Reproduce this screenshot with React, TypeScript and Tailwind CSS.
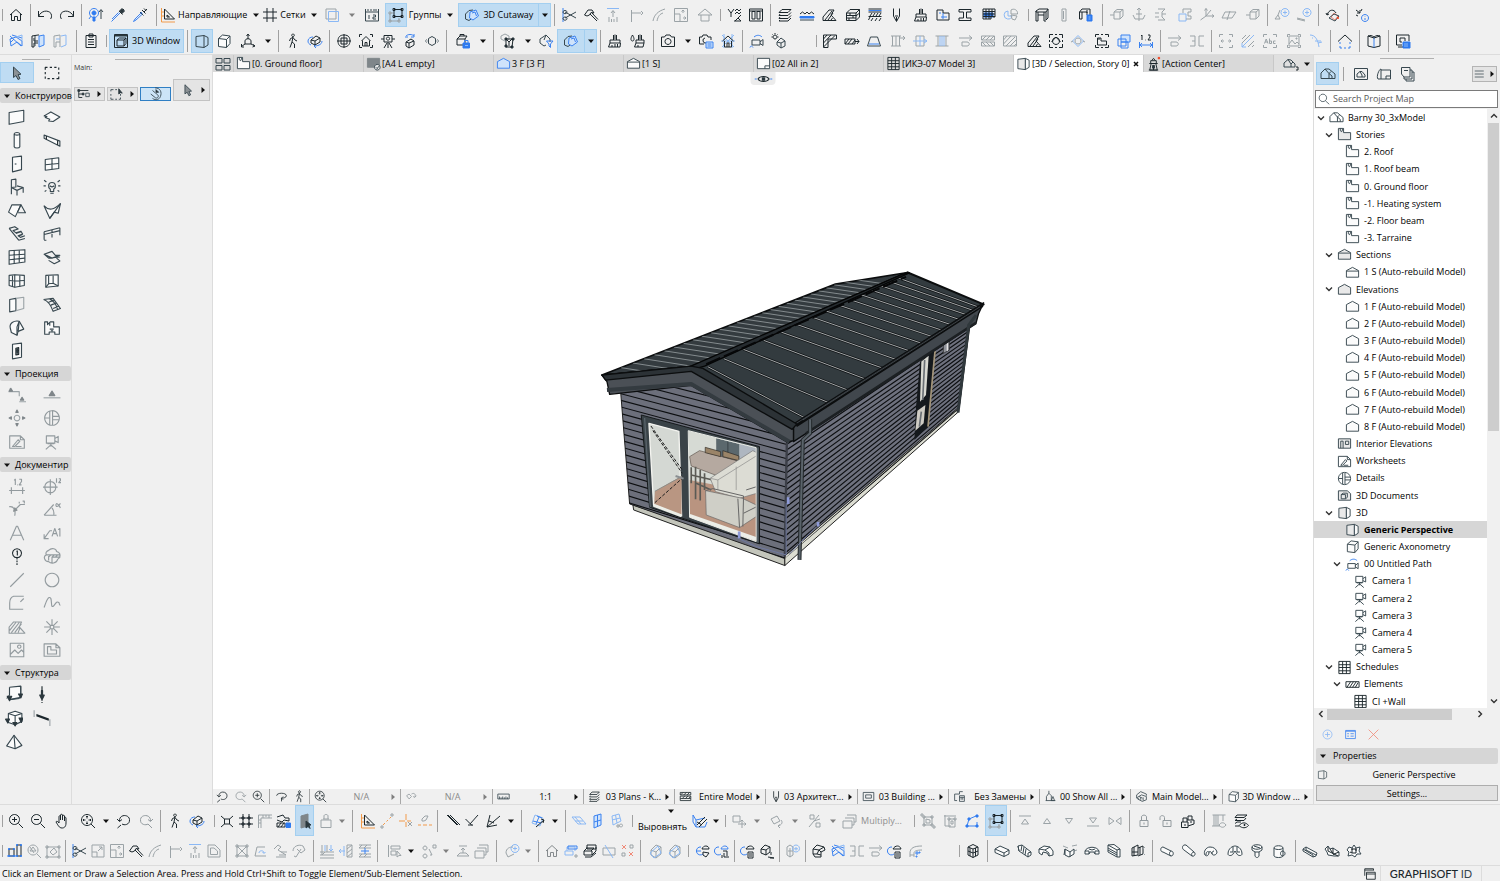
import { useState } from "react"

type Tone = { stroke: string; fill: string }

const TONES: Record<string, Tone> = {
  k: { stroke: "#37474f", fill: "none" },
  b: { stroke: "#3b82f0", fill: "none" },
  c: { stroke: "#8ab8f5", fill: "none" },
  g: { stroke: "#9ba3a7", fill: "none" },
  o: { stroke: "#f29a4a", fill: "none" },
  r: { stroke: "#f08a78", fill: "none" },
  h: { stroke: "#1c272c", fill: "none" },
  K: { stroke: "#2b383e", fill: "#2b383e" },
  B: { stroke: "#2f7bf0", fill: "#2f7bf0" },
  G: { stroke: "#7f868a", fill: "#7f868a" },
  D: { stroke: "#37474f", fill: "#8b9195" },
  W: { stroke: "#37474f", fill: "#fbfbfb" },
  L: { stroke: "#37474f", fill: "#e9e9e9" },
  R: { stroke: "#f4401c", fill: "#f4401c" },
  C: { stroke: "#3b82f0", fill: "#cfe3fb" },
}

// 16x16 drawings: parts split by ";", each with an optional tone prefix
const ICONS: Record<string, string> = {
  home: "h:M2 8L8 2.5L14 8M3.5 7V13.5H6.5V9.5H9.5V13.5H12.5V7",
  undo: "h:M1.5 4V9.5H7M1.5 9.5C4 3.5 11 2.5 14 6.5C15 9 14.5 11 13.5 12",
  redo: "h:M14.5 4V9.5H9M14.5 9.5C12 3.5 5 2.5 2 6.5C1 9 1.5 11 2.5 12",
  find: "b:M6 1.5a4.5 4.5 0 1 0 .01 0M3 9L1 12;B:M6 4a2 2 0 1 0 .01 0M5 10H7V14H5Z;k:M13 12V3M11 5L13 2.5L15 5",
  pipette: "h:M14 2L10 6M9 4L12.5 7.5;K:M12 1.5L14.5 4L12 6.5L9.5 4Z;b:M10 6L3 13L1.5 14.5M8.5 5.5L2 12",
  syringe: "h:M15 2L12 5M10 3L13.5 6.5M12 1.5L14 3.5;b:M10 5L3 12L1.5 14.5L4 13L11 6.5;k:M8 5L11.5 8.5",
  guide: "h:M4.5 2V12H14.5ZM7 8V10H9.5Z;o:M1.5 1V15H15M1.5 5H4M1.5 9H4",
  grid: "h:M5 1V15M11 1V15M1 5H15M1 11H15",
  trace: "g:M2 2H12V12H2Z;c:M4.5 4.5H14.5V14.5H4.5Z",
  ruler12: "k:M1.5 2V5H14.5V2M4 2V4M7 2V4M10 2V4M12 2V4M1.5 5V14H14.5V5M5 8V12M9 8H11.5V10H9V12H12",
  groups: "h:M6 2.5H14V9.5H6ZM5 1.5H7V3.5H5ZM13 1.5H15V3.5H13ZM5 8.5H7V10.5H5ZM13 8.5H15V10.5H13Z;g:M2 6V14H11V11M2 6H5M1 5H3V7H1ZM1 13H3V15H1ZM10 13H12V15H10Z",
  cutaway: "k:M1.5 12V7L5 3.5L9 3M1.5 12L5 13.5L7 12;C:M6 5L12 3L14.5 9L9 13L5.5 11Z;b:M8 6L11 5L12.5 9",
  scissors: "b:M2 1V15;k:M4 5L15 11M4 11L15 5M4 3.5a2 1.6 0 1 0 .01 0M4 10a2 1.6 0 1 0 .01 0",
  hammer: "h:M1.5 8L5 3H9L11 6L8 5.5L6.5 8L4 9ZM7 7L14 14M9 6L15 12.5",
  trimup: "c:M2 1.5H14;g:M8 10V4M6 6L8 3.5L10 6M4 10V15M6.5 12V15M9 12V15M12 10V15",
  corner: "g:M2.5 15V6H12M2.5 9V3M12 4L14 6L12 8",
  fillet: "g:M2 14C3 8 7 4 14 2M6 14C7 9 9 7 12 6",
  resize: "g:M1.5 1.5H14.5V14.5H1.5ZM1.5 7H7V14.5M10 6V3M8.5 4.5L10 3L11.5 4.5M10 11H13M11.5 9.5L13 11L11.5 12.5",
  roofup: "g:M1 8L8 2L15 8L12 8V14H4V8ZM4 8H12",
  tools: "h:M2 2L5 6V10M8 2L5 6M9 4L11 2L13 4L15 2M9 7L11 5L13 7L15 5M9 14L15 8M8 14H15L12 11",
  door2: "h:M1.5 2H14.5V14H1.5ZM4 4.5H7V12H4ZM9 4.5H12V12H9ZM1.5 2V4H14.5",
  layers: "h:M5 2.5H14L11 5.5H2ZM14 5.5L11 8.5H2L3 7M14 8.5L11 11.5H2L3 10M14 11L11 14H2L3 13",
  wave: "h:M1 7L3.5 5L6 7L8 5L10 7L12.5 5L15 7;B:M1 9.5H15V11H1Z;k:M1 13H15",
  hatch: "h:M2 13.5V10L8 3H13L10 8L15 13.5ZM4 13L11 4M7 13L12 6M10 13L11.5 11",
  bricks: "h:M1.5 6L5 2.5H14.5V10L11 13.5H1.5ZM1.5 6H11V13.5M11 6L14.5 2.5M1.5 8.5H11M1.5 11H11M5 6V8.5M8 8.5V11M4 11V13M11 9L14.5 6",
  strata: "h:M1.5 2H14.5M1.5 5H14.5M3 9L5 6M6 9L8 6M9 9L11 6M12 9L14 6M1.5 9.5H14.5M1.5 13L3 10M4 14L6 11M8 14L10 11M12 14L14 11;b:M1.5 3.5H14.5",
  pen: "h:M4.5 1.5V9L7.5 14.5L10.5 9V1.5M6 9H9M7.5 10V14",
  brush: "h:M8 1.5V6M6.5 2V7M9.5 2V7M3 7H13V10H3ZM3 10L1.5 14H13L13.5 10M5 12V14M8 11V14M10.5 11V14",
  puzzle: "h:M2 3H8V6H14V13H2Z;b:M4 6H6M6 10H12M8 6V12",
  ibeam: "h:M2 2.5H14V5H9.5V11H14V13.5H2V11H6.5V5H2Z",
  tableblue: "B:M3 6H12V10H3Z;h:M2 2H14V10H12M2 2V12H10V10M2 4.5H14M2 7H14M2 9.5H14M5 2V12M8 2V12M11 2V10",
  pie: "c:M5 4a4 4 0 1 0 4 5H5Z;g:M8 3C11 1 15 3 14.5 7H8ZM8 8L14 9L12 13L9 12Z",
  shelf: "h:M2 4L5 2H14V11L12 13V5H2ZM2 4V14H4V8H10V14H12M12 5L14 2M4 5V8M10 5V8",
  colgray: "g:M6 2H10V14H6ZM7.5 4V12",
  sheet: "h:M1.5 5L4 2H12V8M1.5 5H9V8M1.5 5V12H4M4 5V12M9 3V6;B:M9 8H14V14H9Z;c:M10.5 10H12.5M10.5 12H12.5",
  cube3: "g:M5 5L8 2.5H14V9L11 12H5ZM5 5H11V12M11 5L14 2.5M1 8H5",
  axisanchor: "g:M8 1V14M6 3L8 1L10 3M2 8L4 12H12L14 8M5 7H11",
  split3: "g:M5 2H12L9 5V10L12 13H5M2 6H6M2 10H6M9 7H13",
  overlap: "c:M2 7H9V14H2Z;g:M6 2H14V5H11V9H14V12H9M6 2V6",
  axes: "g:M7 9V1.5M5.5 3.5L7 1.5L8.5 3.5M7 9L1.5 13M7 9H15M13 7.5L15 9L13 10.5M7 9L12 3",
  plane: "g:M4 5H15L11 11H1ZM9 4L6 13",
  plusshape: "g:M1 12L4 8L6 12ZM4 8L6 3;c:M11 1.5a4 4 0 1 0 .01 0M11 3.5V7.5M9 5.5H13",
  plusline: "g:M1 11L9 13M1 12L9 14;c:M11 1.5a4 4 0 1 0 .01 0M11 3.5V7.5M9 5.5H13",
  rotcam: "h:M2 8C4 2 9 2 11 6M1 6L2 8L4 7;r:M9 6L13 9L10 13L6 10Z;k:M4 11L9 7L14 9L10 14Z;R:M12.5 10.5h1v1h-1z",
  info: "h:M2 3L6 6M3 6L6 6L6 3M2 8L4 9M8 2L7 4;b:M11 7.5a3.5 3.5 0 1 0 .01 0M11 9.5V10M11 11V13",
  favblue: "b:M2 6L8 4L14 8V13L9 9L3 13ZM2 3L13 13M4 2L14 5M2 10L6 6;c:M8 4L14 2V8",
  panelblue: "h:M2 3L8 2H9M2 3V14H4V10H8M4 5V8H8;C:M9 3L14 2V12L9 14Z;k:M5 3V13",
  panelgray: "g:M2 3L8 2V14M2 3V14H4V9H8;c:M9 3L14 2V12L9 14M4 6H8",
  clipboard: "h:M3 2.5H13V14.5H3ZM6 1H10V4H6ZM5 6.5H11M5 9H11M5 11.5H11",
  win3d: "h:M1.5 1.5H14.5V14.5H1.5ZM4 7L6.5 5H13V10.5L11 13H4ZM4 7H11V13M11 7L13 5;K:M2 2H14V3H2Z",
  persp: "k:M2 3.5L10 2.5V14.5L2 13.5ZM10 2.5L14 4.5V12L10 14.5",
  perspbold: "L:M2 3.5L10 2.5V14.5L2 13.5Z;W:M10 2.5L14 4.5V12L10 14.5Z",
  axono: "W:M2.5 5.5L6.5 2L14 3V10.5L10.5 14.5L2.5 13.5Z;k:M2.5 5.5L10.5 6.5V14.5M10.5 6.5L14 3",
  cam3: "h:M8 6V1.5M6.5 3L8 1L9.5 3M5 8C5 5 11 5 11 8V11H5ZM5 11L1.5 13.5M11 11L15 13M1.5 11V14H4M13 11.5L15 13L12.5 14",
  walk: "h:M8 1a1.3 1.3 0 1 0 .01 0M8 4L7 9L9.5 11V15M7 9L5 14.5M4.5 8L5.5 5.5L8 4.5L10 7L12 8",
  orbit: "b:M1 8C1 5 4 4 6 4M15 8C15 12 10 13 7 13M7 13L9 11M7 13L9 15M1 8C1 10 2 11 4 12;h:M4 7L9 3L13 5V9L8 12L4 10ZM4 7L8 8L13 5M8 8V12",
  target: "h:M8 2C13 2 14 5 14 8C14 12 11 14 8 14C4 14 2 12 2 8C2 4 4 2 8 2M8 1V15M1 8H15M5 5H11V11H5Z",
  fitview: "h:M1.5 4V1.5H4M12 1.5H14.5V4M1.5 12V14.5H4M12 14.5H14.5V12M3.5 8L8 3.5L12.5 8M4.5 7.5V13H11.5V7.5M7 13V9.5H9V13",
  survey: "h:M4 2.5H12V9H4ZM8 4a1.6 1.6 0 1 0 .01 0M8 9V15M7 10L4 15M9 10L12 15M1 6H4M12 6H15",
  rotbox: "b:M4 3C6 1 10 1 12 3M3 4H6M12 1V4H9;h:M4 9L9 6L12 8V12L7 15L4 13ZM4 9L7 10L12 8M7 10V15",
  expand: "g:M1 8H4M12 8H15M3 6L1 8L3 10M13 6L15 8L13 10;k:M8 3.5L11.5 5.5V10.5L8 12.5L4.5 10.5V5.5Z",
  boxlock: "h:M2 6L5 3H12L10 6V12H2ZM2 6H10M5 3V1.5H9V3;B:M8 10H14.5V15H8Z;b:M9.5 10V7.5H13V10;c:M10 12.5H13",
  nodes: "K:M5 5h2v2H5ZM12 5h2v2h-2ZM5 12h2v2H5ZM11 13h2v2h-2Z;g:M1 3L5 1L9 3V6L5 8L1 6Z;h:M6 6L13 6L12 14H6ZM6 6L9 9L12 6M9 9V13",
  filter: "k:M2 10V6L8 2L12 6V9M2 10L6 13L8 12M6 7L8 2;b:M8.5 8H15L12.5 11V14.5L11 13V11Z",
  water: "h:M11 1.5V6M9.5 2V7M12.5 2V7M7 7H15V10H7ZM7 10L5.5 14H14L15 10M9 12V14M3.5 2C6 6 5 8 3.5 8C2 8 1 6 3.5 2",
  photo: "h:M1.5 4H4.5L6 2H10L11.5 4H14.5V13.5H1.5ZM8 5.5a3 3 0 1 0 .01 0",
  photoset: "h:M1.5 4H4L5 2H9L10 4H13V7M1.5 4V11H6M7 5a2.5 2.5 0 1 0 1 5;C:M8 9H15V15H8Z;b:M9.5 11H13.5M9.5 13H13.5",
  housegrid: "c:M2 2L14 14M14 2L2 14M1 8H15M4 1V15M12 1V15;h:M2.5 8L8 3L13.5 8M4.5 8V14H11.5V8M7 14V10H9V14",
  campath: "k:M3 7H11V12H3ZM11 9L14 6.5V12.5L11 10.5;b:M5 4C8 1.5 11 2 13 4M1 14.5C2 12 3 13 4 14.5",
  sunhouse: "h:M4 2a2 2 0 1 0 .01 0M4 0V1M0.5 4H1.5M6.5 4H7.5M1.5 1.5L2 2M6.5 1.5L6 2;k:M6 9L10 5L14 8V13L10 15L6 12ZM6 9L10 10L14 8M10 10V15",
  wallcorner: "h:M1.5 2H14.5V6H6V14.5H1.5ZM1.5 6L5 2M1.5 10L9 2M1.5 14L13 2.5",
  beamarrow: "h:M1 6H11V11H1ZM1 11L5 6M4 11L8 6M8 11L11 7M11 8.5H15M13 6L15 8.5L13 11",
  trap: "k:M4.5 4H11.5L14.5 13H1.5Z;b:M3 11H13",
  colsarrow: "g:M1 3H11M1 13H11M2.5 3V13M6 3V13M9.5 3V13M9 5H15M13 3L15 5L13 7",
  colsarrowb: "g:M4 3H12M4 13H12M4 3V13M12 3V13;c:M1 8H15M12 6L15 8L12 10M8 3V13",
  beamb: "g:M1.5 3H14.5M1.5 13H14.5M4 3V13M12 3V13;c:M8 3V13M6 3V13M10 3V13",
  arrowcap: "g:M1 5H14M11 2.5L14 5L11 7.5M4 9H9C12 9 12 13 9 13H4M4 9V13",
  hatchg: "g:M1.5 3H14.5V7H1.5ZM1.5 9H14.5V13H1.5ZM2 7L6 3M6 7L10 3M10 7L14 3M2 9L6 13M6 9L10 13M10 9L14 13",
  hatchg2: "g:M1.5 3H14.5V13H1.5ZM1.5 7L5 3M1.5 11L9 3M4 13L13 4M8 13L14 7M12 13L14 11",
  selcirc: "h:M1.5 5V1.5H5M7 1.5H9M11 1.5H14.5V5M14.5 7V9M14.5 11V14.5H11M9 14.5H7M5 14.5H1.5V11M1.5 9V7M8 4.5a3.5 3.5 0 1 0 .01 0M3.5 9L8 4L12.5 9",
  circb: "c:M8 2.5L13.5 8L8 13.5L2.5 8Z;g:M8 5a3 3 0 1 0 .01 0M1 9L3 8M13 8L15 9",
  selplan: "h:M1.5 4V1.5H5M7 1.5H9M11 1.5H14.5V4M1.5 12V14.5H5M7 14.5H9M11 14.5H14.5V12M3.5 5H7V8H12.5V12H3.5ZM5 5V7",
  dupe: "C:M5 2H14V9H5Z;b:M2 6H10V13H2ZM5 9H12V15H5Z",
  dim12: "h:M4 2V7M3 3L4 2M7 7H7.5M10 2H12V4L10 7H13;b:M1.5 9V15M14.5 9V15M1.5 12H14.5M4 10L2 12L4 14M12 10L14 12L12 14",
  mirror: "g:M1 3H6V13H1M10 3V13M15 3H10M15 13H10M3 8H6",
  frame: "g:M1.5 4V1.5H5M11 1.5H14.5V4M1.5 12V14.5H5M11 14.5H14.5V12M3 8H6M10 8H13M4.5 6.5L3 8L4.5 9.5M11.5 6.5L13 8L11.5 9.5",
  hatchb: "g:M2 6L6 2M2 10L10 2M8 14L14 8M12 14L14 12;c:M2 14L14 2M2 10V14H6",
  abc: "g:M1.5 4V1.5H5M11 1.5H14.5V4M1.5 12V14.5H5M11 14.5H14.5V12M2.5 10.5L4.2 6L6 10.5M3 9H5.5M7.5 5.5V10.5H9.5V8H7.5M13.5 8H11.5V10.5H13.5",
  image: "g:M1.5 4V1.5H4M12 1.5H14.5V4M1.5 12V14.5H4M12 14.5H14.5V12M3 3H13V13H3ZM3 11L6 7L9 11L11 9L13 11M10 5h1v1h-1z",
  arcnode: "c:M2 2C8 2 10 8 11 14M7 8H13M4 5h1M10 10L14 9",
  roofdash: "h:M1 8.5L8 2L15 8.5;b:M3 9V11M3 13V15H5M7 15H9M11 15H13V13M13 11V9",
  book: "h:M2 3C4 2 6 2.5 8 4C10 2.5 12 2 14 3V13L8 14.5L2 13Z;b:M8 4V14.5;h:M2 3L8 5L14 3",
  monlock: "h:M1.5 2H14V8M1.5 2V12H7M5 5H10V8M5 5V9H7M3 14H8;B:M8 9H15V15H8Z;c:M9 11H13M9 13H13",
  cursor: "D:M4.5 2V12.5L7 10.5L9 14.5L11 13.5L9 9.7L12 9.2Z",
  marquee: "h:M2 5V3H4M6 3H8M10 3H12M14 3V5M14 7V9M14 11V13H12M10 13H8M6 13H4M2 13V11M2 9V7",
  wall: "W:M1 4L14 2V12L1 14.5Z",
  slab: "W:M1 7L7 3.5L15 8L9 12L5 11.5L6 10L2 8.5L3.5 7.5Z",
  column: "W:M5.5 2.5C6 1 10 1 10.5 2.5V14C10 15.5 6 15.5 5.5 14ZM5.5 2.5C6 4 10 4 10.5 2.5",
  beam: "W:M1 3.5L15 9V13.5L1 6.5Z;h:M3 4.5V7.5M13 8.5V12.5",
  door: "W:M4 2L12 1V13L4 15Z;k:M6 8H7.5",
  window: "W:M2 4L14 2.5V12L2 13.5Z;k:M8 3.2V12.8M2 8.7L14 7.5",
  chair: "k:M3 1.5L7 1V8L3 8.5ZM3 8.5V14.5M3 8.5L8 11L13.5 8.5L8 7M8 11V15.5M13.5 8.5V13",
  lamp: "k:M8 4C11.5 4 12 8 9.5 10V12H6.5V10C4 8 4.5 4 8 4M6.5 13.5H9.5M6 7L8 8L10 7M1 2L3 3.5M15 2L13 3.5M0.5 7H2.5M13.5 7H15.5M1.5 12L3 11M14.5 12L13 11",
  roof: "W:M3.5 2.5H11.5L6.5 13L0.5 9Z;k:M11.5 2.5L15.5 9.5L9 9.5M11.5 2.5L8.5 9",
  shell: "W:M1 3.5C5 8 10 7 15.5 1.5L13.5 10L10 9L6 14.5Z;k:M6 14.5L15.5 1.5",
  stair: "k:M1 3L6 1.5L9 3.5L4.5 5L7 7L11.5 5.5L13 8L9 9.5L11 11L15 9.5M9.5 13.5L15 12M1 3L9.5 13.5M4.5 5L9 3.5M7 7.5L11.5 6M9 10L13 8.5",
  rail: "k:M1 6L15 2.5M1 8.5L15 5M1 6V13M8 4.5V11M15 2.5V9M1 13.5H3",
  curtain: "W:M1 2.5L15 1.5V12.5L1 14.5Z;k:M5.5 2V14M10 2V13M1 6.5L15 5.5M1 10.5L15 9",
  deck: "k:M1 5.5L8 3L11 6.5L15 6.5L8 9ZM1 5.5L5 9L8 9M5 9L15 8M5 11L10 14L15 11.5L12 9",
  curtain2: "W:M1 3L6 2.5L14.5 3V12L6 13.5L1 12Z;k:M4 3V13M6 2.5V13.5M10.5 3V13M1 7.5L6 8L14.5 7.5",
  corner2: "W:M2.5 3L13.5 2.5V12.5L2.5 13.5Z;k:M9 3V10M2.5 13.5L5 10.5L9 10L13.5 12.5M5 3.5V10.5",
  opening: "W:M1.5 4L7 3V14L1.5 15Z;g:M7 3L14 2V12L7 14",
  mesh: "k:M0.5 4L9 3L15.5 12L9 14.5C7 9 4 5 .5 4M7 9L12 7M5 6.5L10 4.5M9 12L14 10M6 3.5C9 5 12 9 13 13",
  morph: "W:M2 8C1 4 5 1 10 2L14 9L9 11L8 14.5L3 12Z;k:M10 2L8 7L8 14.5M10 2L9 11",
  zone: "W:M1.5 2.5H4V5L6.5 2.5H9.5V7H14.5V13.5H10.5V11.5H5.5V13.5H1.5Z;k:M6 6V3M6 9H9.5M7 10.5H9",
  switch: "W:M4 2L12 1V13.5L4 15Z;h:M7 5.5L9.5 5V11L7 11.5ZM7 8L9.5 7.5;K:M7.8 6V10H8.5V6Z",
  section: "g:M0.5 5H10V9M12 11V12.5M10 14H16M2 2V3;G:M1 4.5L2.5 2L4 4.5ZM11 12.5L12.5 10L14 12.5Z",
  elev: "g:M0.5 10.5H15.5;G:M5.5 8.5L8 4.5L10.5 8.5Z",
  intelev: "g:M8 5.5a2.5 2.5 0 1 0 .01 0;G:M7 3L8 1L9 3ZM7 13L8 15L9 13ZM3 7L1 8L3 9ZM13 7L15 8L13 9Z",
  detail: "k:M8 1.5a6.5 6.5 0 1 0 .01 0M6 2V14M8.5 2V14M8.5 6.5H14M8.5 9.5H14M1.5 8H6",
  sheetpen: "k:M1.5 2.5H11L14.5 6V13.5H1.5ZM11 2.5V6H14.5M4 12L9 6L10.5 7.5L6 12ZM7 12H12",
  camera: "k:M3 2.5H10.5V9H3ZM10.5 5L13.5 3V8.5L10.5 7M7 9V12M2.5 14.5L7 10.5L11.5 14.5M4 9.5H10",
  dim: "k:M1 12H15M3 9V15M13 9V15M5.5 3L6.5 2V7M8 7H8.5M10 2H12V4L10 7H12",
  level: "k:M6.5 4a5 5 0 1 0 .01 0M6.5 2V16M0 9H13M12 1V5M14 1.5H15.5V3L14 5H16",
  radial: "k:M1 6C5 5 7 9 6 14M6 9L11 4H15M10 1.5V3M13 1H14.5V3;K:M5 10L6 7L8 9Z",
  angle: "k:M1 13.5H12M1 13.5L9.5 4M8 7C9.5 9 10 11 9.5 13M15.5 3C13 7 11.5 6 11.5 4.5C11.5 3 13 2 15.5 7",
  textA: "k:M2 14.5L7.5 2H8.5L14 14.5M4 10H12",
  label: "k:M1 13L6 6H8M1 9V13H5M8 11L10.5 4L13 11M9 8.5H12M13.5 5L15 4V11",
  marker: "h:M8 1.5a4 4 0 1 0 .01 0M7.5 4L8.3 3.5V7.5M8 9.5V11M8 12V13.5M8 14.5V16",
  patch: "k:M5 3C8 0 12 2 12 4C16 5 16 9 13 11C12 15 7 15 5 13C1 13 0 8 3 7C2 5 3 4 5 3M3 7H15V9H8V14M5 9L7 7M8 9L10 7M11 9L13 7M5 12V8",
  line: "k:M2 14L14 2",
  circle: "k:M8 2a6 6 0 1 0 .01 0",
  poly: "k:M14 4L11 7M14 2H5C2 3 1.5 5 1.5 8V13.5H13.5",
  spline: "k:M1 12C3 6 5 1 7 4C8 8 7 12 9 11C11 9 12 6 14 7.5C15 8.5 14 10 15.5 10",
  fill: "k:M1 13.5V8L5 3.5H12L10 8L15 13.5ZM3 13L10 4M6 13L12 5M9 13L10.5 9M1.5 11L7 4",
  hotspot: "k:M8 1V6M8 10V15M1 8H6M10 8H15M3 3L6.5 6.5M13 3L9.5 6.5M3 13L6.5 9.5M13 13L9.5 9.5M6.5 6.5H9.5V9.5H6.5Z",
  figure: "k:M2 2H14V14H2ZM2 12L6 8L9 11L12 8L14 10M10 3.5a1.5 1.5 0 1 0 .01 0",
  drawing: "k:M1 2.5H11.5L15 6V13.5H1ZM11.5 2.5V6H15M4 5H7V8H12V11.5H4Z",
  sup2d: "W:M4 2L14 1V11L4 13;k:M4 2V9M14 1V8M1.5 12L4 9M4 13L13 12;K:M2 10L6 10L4 14ZM12 8H15.5L14 11.5Z",
  point: "h:M8 1V10M8 13V14M8 15V16;K:M6 9H10L8 13ZM7.5 5H8.5V9H7.5Z",
  box3d: "W:M3 4L9 2L15 4V11L9 14L3 12Z;k:M3 4L9 6L15 4M9 6V14;K:M0.5 9H4L2.5 12.5ZM7 12H10.5L9 15ZM12.5 8H16L14.5 12Z",
  link: "g:M1 1V7M15 9V15;h:M3 5L14 9M3 6L14 10M3 5.5L14 9.5",
  tetra: "W:M8 2L15 11L9 14L1.5 11.5Z;k:M8 2L9 14",
  story: "W:M1.5 1.5H7V6H14.5V13.5H1.5Z;k:M3.5 1.5V4L5 5L6.5 1.5",
  storygray: "L:M1.5 1.5H7V6H14.5V13.5H1.5Z;k:M3.5 1.5V4L5 5L6.5 1.5",
  sect: "W:M1.5 6L8 2.5L14.5 6V13H1.5Z;k:M1.5 6.5H14.5",
  sectgray: "L:M1.5 6L8 2.5L14.5 6V13H1.5Z;k:M1.5 6.5H14.5",
  elv: "W:M1.5 6L8 2.5L14.5 6V13H1.5Z",
  elvgray: "L:M1.5 6L8 2.5L14.5 6V13H1.5Z",
  elvblue: "C:M1.5 6L8 2.5L14.5 6V13H1.5Z",
  project: "k:M1 12.5V7L5 3H9L15 8V12.5H1M9 12.5V7.5L5 3M9 7.5L11 5.5M12 12.5V10L9 7.5",
  intel: "L:M1.5 3H14.5V13H1.5Z;k:M4 5.5H6.5V13M4 5.5V13M9 5.5H12.5V9H9Z",
  doc3d: "L:M1.5 3H11L14.5 6V13H1.5Z;k:M4.5 7L6.5 5.5H11V10L9 11.5H4.5ZM4.5 7H9V11.5",
  schedule: "h:M2 1.5H14V14.5H2ZM2 5H14M2 8H14M2 11.5H14M6 1.5V14.5M10 1.5V14.5",
  element: "h:M1 5H15V11H1ZM2 11L6 5M5 11L9 5M8 11L12 5M11 11L14 6",
  layoutgray: "G:M1.5 2.5H14.5V12H1.5Z;L:M12 9a3 3 0 1 0 .01 0;k:M10.5 12L12 13.5L13.5 11",
  layout: "W:M1.5 2.5H14.5V13.5H1.5Z;k:M9.5 13.5V10.5H14.5",
  tower: "h:M5 5H11V8H5ZM6 5L8 2.5L10 5M3.5 8H12.5M5.5 8L4 15H12L10.5 8M3 15H13M8 10V15;K:M7 10h2v3H7z;R:M13 1.5h1.5v1.5h-1.5z",
  squares: "k:M1 2.5H7V7H1ZM9 2.5H15V7H9ZM1 9.5H7V14H1ZM9 9.5H15V14H9Z",
  cloudhouse: "k:M1 11V7L5 3.5L8 4L12 8V11H1M5 3.5L8 8V11M8 8L10 6;h:M13 11H15V14H13",
  viewmap: "k:M1.5 2.5H14.5V13.5H1.5ZM4 11V8L7 5.5H9L12 9V11H4M9 11V9L7 5.5",
  layoutbook: "k:M2 13C0 11 3 3 5 3V13H14.5V4H5M10 13V10H14.5M2 13H5",
  publisher: "k:M2.5 1.5H11V11H5L2.5 8ZM5 4.5H9M5 11V13H13V4H11M7 13V15H15V6H13",
  zoomin: "h:M6.5 1.5a5 5 0 1 0 .01 0M10.5 10.5L15 15M6.5 4V9M4 6.5H9",
  zoomout: "h:M6.5 1.5a5 5 0 1 0 .01 0M10.5 10.5L15 15M4 6.5H9",
  hand: "h:M5 10V3.5C5 2.5 6.5 2.5 6.5 3.5V7V2C6.5 1 8.5 1 8.5 2V7V3C8.5 2 10.5 2 10.5 3V8V5C10.5 4 12 4 12 5V10C12 14 10 15 8 15C5 15 4 12 2 9C2 8 4 8 5 10",
  zoomfit: "h:M7 1.5a5.5 5.5 0 1 0 .01 0M11 11L15 15M7 3V5.5M7 8.5V11M3 7H5.5M8.5 7H11M6 4L7 3L8 4M6 10L7 11L8 10M4 6L3 7L4 8M10 6L11 7L10 8",
  zprev: "h:M3.5 8C3 1 13 1 13.5 6.5C14 12 8 12.5 6 11M1 6L3.5 8.5L6 6.5M5 12L1.5 15",
  znext: "k:M12.5 8C13 1 3 1 2.5 6.5C2 12 8 12.5 10 11M15 6L12.5 8.5L10 6.5M10 11L14 15",
  snap: "h:M2 3L6 6.5M14 3L10 6.5M2 14L6 10.5M14 14L10 10.5M5.5 6H10.5V11H5.5Z",
  gridb: "h:M5 1V15M11 1V15M1 5H15M1 11H15M4 4h2v2H4zM10 4h2v2h-2zM4 10h2v2H4zM10 10h2v2h-2z",
  rulerg: "g:M1.5 15V2H15M4 15V5H15M6 2V5M9 2V4M12 2V5M1.5 7H4M1.5 10H4",
  gravity: "h:M1 4L7 2L9 5H13V8L8 7L6 9L1 7M1 10H9V14H1ZM2 14L5 10M5 14L8 10;B:M10 10H14.5V14.5H10Z",
  lockwall: "G:M4 3L11 1V13L4 15Z;K:M9 8V15L11 13.5L13 15.5L12 12H14Z",
  weight: "g:M6 6V3C6 1 10 1 10 3V6M3 7H13V14.5H3ZM5 6H11",
  oline: "g:M2 13h2v2H2zM12 1h2v2h-2z;o:M4 12L6 10M7.5 8.5L9 7M10.5 5.5L12 4",
  ocross: "o:M1 8H7M8 1V7M8 9V14;g:M10 9L14 13M14 9L10 13;o:M9 8H13",
  erase: "g:M5 6L8 3H11L9 7L7 8H5Z;o:M1 12H4M6 12H10M12 12H15",
  paral: "h:M2 2L12 12M3 2L13 12M5 2L15 12",
  perp: "h:M1.5 6L8 12.5M6 11L14 2M4 12H9",
  bisect: "h:M2 14L15 3M2 14L5 2M2 14L12 12M4 8L9 10",
  editplane: "c:M6 2L14 5L11 13L3 10Z;b:M8 3L13 5M4 8L12 10M10 4L7 11;h:M7 14L15 7M12 6L15 7L14 10",
  planeh: "c:M1 4H9L15 11H7ZM4 4L10 11M4 8H12",
  planev: "C:M4 3L11 1V12L4 15Z;b:M7.5 2V13.5M4 9L11 7",
  planeg: "c:M3 3L10 1L12 8L4 12ZM6.5 2L8 10M3 7L11 5;g:M8 12h2v2H8zM12 11a1.5 1.5 0 1 0 .01 0",
  skew: "b:M1 2L4 7V14H13L15 9M1 2V9L4 14M4 7L13 5;h:M5 12L13 4M7 14L15 6M5 9L10 12",
  move: "g:M2 3H9V9H2ZM7 11H15M11 7V15M9.5 8.5L11 7L12.5 8.5M13.5 9.5L15 11L13.5 12.5",
  rotate: "g:M2 6L8 3L11 8L5 11ZM12 7C14 9 13 12 9 13M11 11.5L9 13L11 15",
  percent: "g:M2 14L12 2M3 2H7V6H3ZM9 10H13V14H9ZM7 8L13 6",
  stack: "g:M5 2H14V9H12M3 5H12V12H10M1 8H10V15H1Z",
  grp1: "g:M4 4H12V12H4ZM3 3h2v2H3zM11 3h2v2h-2zM3 11h2v2H3zM11 11h2v2h-2zM6 6L10 7V10H6ZM1 1h2v2H1zM13 13h2v2h-2z",
  grp2: "g:M2 3H14M3 2V13H9M7 6H13V14H7ZM6 5h2v2H6zM12 5h2v2h-2zM9 8h2v3H9z",
  polyb: "b:M3 13H13V9M3 13L5 6L12 3;B:M2 12h2v2H2zM4 5h2v2H4zM12 2h2v2h-2zM12 12h2v2h-2z",
  topup: "g:M2 3H14M4.5 11L8 6L11.5 11Z",
  up: "g:M4.5 10.5L8 5.5L11.5 10.5Z",
  down: "g:M4.5 5.5L8 10.5L11.5 5.5Z",
  bottom: "g:M2 13H14M4.5 5L8 10L11.5 5Z",
  flip: "g:M2 4.5L7 8L2 11.5ZM14 4.5L9 8L14 11.5Z",
  lock: "k:M4 7.5H12V13.5H4ZM5.5 7.5V4C5.5 1.5 10.5 1.5 10.5 4V7.5M8 9.5V11.5",
  unlock: "k:M5 7.5H13V13.5H5ZM2 7V4.5C2 2 6.5 2 6.5 4.5V7.5M9 9.5V11.5",
  locks: "h:M1.5 9H8V14.5H1.5ZM3 9V5H7V9M7 7H14V11L8 13M8 7V3H12V7M5 11V13M11 8V10",
  colsg: "g:M1.5 2H14.5M3 2V13M7 2V13M12 2V8M1 13H9M5 2V13M8 12C10 9 13 9 15 12C13 15 10 15 8 12",
  layereye: "h:M4 2H14L11 4.5H2ZM13 5L11 7.5H2L4 6M2 10.5L4 9H8M2 13H6M6 12.5C9 9 13 9 15.5 12.5C13 15.5 9 15.5 6 12.5M11 11.5h1v1h-1z",
  barsb: "h:M2 6H7V13H2ZM10 2H14V13H10Z;B:M1.5 5.5h1v1h-1zM6.5 12.5h1v1h-1zM1.5 12.5h1v1h-1zM6.5 5.5h1v1h-1zM9.5 1.5h1v1h-1zM13.5 12.5h1v1h-1zM13.5 1.5h1v1h-1zM9.5 12.5h1v1h-1z;b:M0 13H9",
  magsel: "g:M7 2a5 5 0 1 0 .01 0M11 11L15 15M4 8L7 4L10 8ZM4 4L8 10",
  framebrush: "g:M2 4H14V14H2ZM1 3h2v2H1zM13 3h2v2h-2zM1 13h2v2H1zM13 13h2v2h-2zM5 9L9 5L12 9L8 12Z",
  scale: "g:M2 2H14V14H2ZM2 9H7V14M8 8L12 4M9 4H12V7",
  offsetc: "g:M2 2H9L14 7V14H2ZM4.5 5H8L11.5 8V11.5H4.5Z",
  crossbox: "g:M3 3H13V13H3ZM3 3L13 13M13 3L3 13M2 2h2v2H2zM12 2h2v2h-2zM2 12h2v2H2zM12 12h2v2h-2z",
  boxrot: "g:M2 13L4 4H12M2 13H13;c:M6 10C6 7 11 7 11 10M9.5 9L11 10.5L12.5 9",
  hamg: "g:M2 6L6 2L9 4L6 7L14 12M9 9H15M7 12H14M4 14H14",
  hamg2: "g:M2 8C2 3 8 1 12 3L14 7L10 10L6 6M10 6L5 14L3 13",
  pil: "g:M1 9H15M1 12H15M1 15H15M3 2V12M8 2V9M3 12L6 9;c:M6 2V8M12 2V8M10 6L12 8L14 6",
  pil2: "g:M9 2H14V14H9ZM9 6L14 2M9 10L14 6M9 14L14 10;c:M1 8H7M3 6L1 8L3 10M6 3V13",
  pil3: "g:M2 2H14M2 5H14M2 11H14M2 14H14M2 14L5 11M7 14L10 11M2 5L5 2M7 5L10 2;b:M4 8H12M8 5V11",
  aligncur: "g:M1.5 2V14M4 3H13V6H4ZM4 8H9V12H4ZM10 8V14L12 12.5H14Z",
  circcur: "g:M3 3a2 2 0 1 0 .01 0M11 2h3v3h-3zM3 11a2 2 0 1 0 .01 0M7 6L10 12L8 12",
  cap: "g:M2 13H14L11 10H5ZM8 10V5M6 7L8 5L10 7M4 3H12",
  addc: "g:M2 10C2 5 6 4 9 4M2 10L4 14L10 11;c:M11 1.5a4 4 0 1 0 .01 0M11 3.5V7.5M9 5.5H13",
  copyb: "c:M2 8H10V12H2ZM4 4H12V8M4 4V8;b:M5 3H14V6H5Z;g:M11 13H15M13 11V15",
  copyk: "h:M2 8H10V12H2ZM4 5H12L9 8M5 2H14V6H5ZM10 12L14 8V4M2 8L5 5M3 14H9L14 10",
  strike: "g:M2 5H14V12H2Z;c:M4 2L12 15",
  dots: "r:M2 2L6 6M6 2L2 6M9 9L13 13M13 9L9 13;g:M10 2h3v3h-3zM2 10h3v3H2z",
  cubec: "g:M3 7L8 2L13 4V11L8 15L3 12ZM3 7L8 9L13 4M8 9V15;c:M2 10L10 3L13 10L6 15Z",
  mep1: "b:M6 4a4 4 0 1 0 2 7M1 8H6;h:M7 6C8 2 14 2 14 6ZM8 9L14 10L11 14L8 12Z",
  mep2: "b:M5 4a4 4 0 1 0 2 7M7 6C8 2 14 2 14 6Z;h:M9 8H13V13M10 10V14H15M8 12V15",
  mep3: "b:M5 4a4 4 0 1 0 2 7;h:M6 6C8 2 13 2 14 6ZM8 9H13V15H8ZM9 11H12M9 13H12",
  mep4: "h:M2 6L6 2L11 4V9L7 12L2 10ZM2 6L7 7L11 4M7 7V12M12 9V12M9 14L15 15M11 15H15",
  cubeplus: "g:M2 4L5 2L8 4V12L5 14L2 12ZM5 5V14M3 8H8;c:M11 2a3.5 3.5 0 1 0 .01 0M11 4V7.5M9 5.8H13",
  cubes: "h:M2 6L6 2L13 4L14 7L10 9V14H4L2 11ZM2 6L8 7L13 4M8 7L6 11L10 12M6 11H2M10 9L8 7",
  pipeg: "g:M2 14V10C2 5 6 3 14 3M6 14V10C6 8 9 7 14 7M2 12H6;b:M8 9h2v2H8zM11 9h1v1h-1zM8 13h1v1H8z",
  rack: "h:M3 4L8 1.5L13 4V12L8 14.5L3 12ZM3 4L8 6L13 4M8 6V14.5M5 5V13M3 8L8 10L13 8M10.5 5V13",
  duct1: "W:M1 6L6 3L15 7V11L10 13.5L1 9.5Z;k:M1 6L10 10V13.5M10 10L15 7",
  duct2: "W:M2 3L6 2L15 9V12L12 14L3 8Z;k:M2 3L3 8M6 2L5 8M8 4L7 10M10 6L9 12M15 9L12 10V14",
  duct3: "W:M1 6L6 3L12 4L15 8V12L11 13L9 10L5 9L4 12L1 10Z;k:M1 6L7 7L11 10V13M7 7L12 4",
  duct4: "g:M1 3L6 5M10 3L15 2M12 8L15 7;W:M3 6L8 9L12 6V11L7 14L3 12Z;k:M3 6L2 12M8 9V14",
  duct5: "W:M1 8C3 3 13 3 15 8V11H11L10 9H6L5 11H1Z;k:M1 8H5V11M15 8H11V11M5 6L8 7L11 6",
  duct6: "W:M2 2L8 1.5L14 6V14L11 14L2 9Z;k:M2 2L11 7V14M11 7L14 6M2 5L11 10M2 7L11 12",
  duct7: "h:M2 5L8 2V12L2 13ZM4 4V13M8 5L13 3V11L8 13M10 4V12M2 9H8;g:M13 6L15 4M13 10L15 12",
  pipe1: "W:M4 4C1 4 1 9 4 9L12 13C15 13 15 8 12 8Z;k:M12 8C10 9 10 12 12 13",
  pipe2: "W:M3 2C1 3 1 6 3 7L11 13C14 14 15 10 13 9L5 2Z;k:M13 9C11 9 10 11 11 13",
  pipe3: "W:M2 12C0 9 3 4 7 4C11 4 13 6 14 9C14 12 10 13 9 11C9 9 7 8 6 9C6 12 4 14 2 12Z;k:M6 9C4 8 3 9 3 12M11 8C9 8 9 10 9 11",
  pipe4: "W:M1 11C1 5 6 3 8 3C10 3 15 5 15 11C15 13 11 13 10 11L8 8L6 11C5 13 1 13 1 11Z;k:M6 4V9M10 4V9M3 9H6M10 9H13",
  pipe5: "W:M3 4C3 1 13 1 13 4V7L10 9V13C9 15 7 15 6 13V9L3 7Z;k:M3 4C4 7 12 7 13 4M6 9H10M5 3L11 5",
  pipe6: "W:M3 5C3 2 12 2 12 5V13C11 15 4 15 3 13Z;k:M3 5C4 7 11 7 12 5M11 8C15 8 15 13 11 13C9 12 9 9 11 8",
  tray1: "W:M1 6L4 4L15 10L14 13L11 14L1 8Z;k:M4 4V7L14 12M1 6L11 12V14",
  tray2: "W:M1 6L4 3L6 6L9 5L15 9V13L10 13L4 12L3 9Z;h:M4 4V8L14 13M9 5V10M6 6L10 12M15 9L10 11",
  tray3: "W:M3 4L6 5L8 2L10 5L14 4L13 8L15 11L11 11L9 14L6 12L2 13L3 9L1 7Z;h:M6 6H10V10H6ZM6 5V7M10 5V8M4 9L6 10",
  orbits: "h:M2 7C2 3 14 3 14 7C14 10 9 10 8 10M10 8L8 10L10 12M8 10V14",
  pan: "k:M2 7L5 5L8 8L5 11ZM8 5C11 3 14 5 12 9M14 7L12 9L10 8",
  meas: "k:M1 5H15V11H1ZM3 8V11M5 9V11M7 8V11M9 9V11M11 8V11M13 9V11",
  modelhatch: "h:M1.5 3H14.5V6H1.5ZM1.5 7.5H14.5V10.5H1.5ZM1.5 10.5V13H14.5V10.5M2 6L5 3M6 6L9 3M10 6L13 3M4 10.5L7 7.5M8 10.5L11 7.5M12 10.5L14 8",
  viewset: "k:M1.5 3H14.5V13H1.5ZM4.5 6H11.5V10H4.5Z",
  swap: "k:M2 5H8V2H12M2 5V13H5M8 7H14V14H8ZM10 9V12M12 9V12M8 9H14",
  renov: "k:M2 13H14M3 13V8L6 4L9 7V13M9 13L13 13L11 8ZM6 4V1",
  model: "k:M2 6L7 2L14 5V7M2 6V10L5 12M3 9L8 6L14 8V12L9 14L5 12ZM7 9V12M10 9V13M5 8L9 10",
  eye: "b:M0 8H2M14 8H16;h:M3 8C5 5 11 5 13 8C11 11 5 11 3 8;K:M7 7h2v2H7z",
  plusc: "c:M8 2.5a5.5 5.5 0 1 0 .01 0M8 5V11M5 8H11",
  listb: "b:M2 3H14V13H2ZM2 4H14M4 7H6M4 10H6M8 7H12M8 10H12",
  del: "r:M2 2L14 14M14 2L2 14",
  menu: "k:M1 4H13M1 8H13M1 12H13",
  search: "k:M6.5 1.5a5 5 0 1 0 .01 0M10 10.5L15 15",
  windows: "h:M4 6H14V14H4ZM2 10V2H12V4M4 8H14M2 3.5H12",
  arrsel: "h:M2 4V12M2 4L13 4M2 8L7 8M2 12H6;K:M1 3h2v2H1zM6 7h2v2H6z;k:M10 7H14V11H10Z",
  marqsel: "k:M1 5V3H4M6 3H8M1 8V10M1 12V14H4M6 14H8M10 14H12V12M12 10V8;K:M10 2V8L12 6.5L14 7Z",
  magnet: "k:M4 4L10 9C12 11 9 14 7 12L2 8M7 1C13 1 15 6 13 11C12 14 8 16 4 13;K:M8 3L11 6L8 6Z",
}

function Icon({ name, size = 16, faint = false }: { name: string; size?: number; faint?: boolean }) {
  const parts = (ICONS[name] ?? "").split(";")
  // drawings that start in a pale tone are pale enough already
  const dim = faint && !/^[gc]:/.test(parts[0])
  return (
    <svg
      width={size}
      height={size}
      viewBox="0 0 16 16"
      strokeWidth="1"
      strokeLinejoin="round"
      className={dim ? "shrink-0 opacity-50" : "shrink-0"}
      aria-hidden="true"
    >
      {parts.map((p, i) => {
        const tagged = p[1] === ":"
        const tone = TONES[tagged ? p[0] : "k"]
        return <path key={i} d={tagged ? p.slice(2) : p} stroke={tone.stroke} fill={tone.fill} />
      })}
    </svg>
  )
}

function Caret({ right = false, faint = false }: { right?: boolean; faint?: boolean }) {
  return (
    <svg width="8" height="8" viewBox="0 0 8 8" className={faint ? "shrink-0 opacity-50" : "shrink-0"} aria-hidden="true">
      <path d={right ? "M2.5 1L6 4L2.5 7Z" : "M1 2.5H7L4 6Z"} fill="#111" />
    </svg>
  )
}

/*
  Toolbar markup: words are icons, "~x" is disabled, "*x" is pressed,
  "|" and ":" are tall and short dividers, "v" / "~v" a drop-down caret,
  "." "_" "__" are blank spacers.
*/
function Strip({ items, small = false }: { items: string; small?: boolean }) {
  return (
    <div className="flex items-center shrink-0 h-full">
      {items.trim().split(/\s+/).map((t, i) => {
        if (t === "|") return <span key={i} className="w-px h-[22px] mx-[3px] bg-[#a0a0a0]" />
        if (t === ":") return <span key={i} className="w-px h-[12px] mx-[2px] bg-[#a0a0a0]" />
        if (t === ".") return <span key={i} className="w-[2px]" />
        if (t === "_") return <span key={i} className="w-[4px]" />
        if (t === "__") return <span key={i} className="w-[12px]" />
        const faint = t[0] === "~"
        const on = t[0] === "*"
        const name = faint || on ? t.slice(1) : t
        if (name === "v") {
          return (
            <button key={i} aria-label="more options" className="w-[14px] h-full flex items-center justify-center">
              <Caret faint={faint} />
            </button>
          )
        }
        return (
          <button
            key={i}
            aria-label={name}
            aria-pressed={on || undefined}
            disabled={faint}
            className={`h-full flex items-center justify-center ${small ? "w-[19px]" : "w-[22px]"} ${
              on ? "bg-[#bfdcf3] outline outline-[#a3cff0] -outline-offset-1" : ""
            }`}
          >
            <Icon name={name} faint={faint} />
          </button>
        )
      })}
    </div>
  )
}

function Labeled({ icon, label }: { icon: string; label: string }) {
  return (
    <button className="flex items-center h-full gap-[2px] shrink-0">
      {icon && <Icon name={icon} />}
      <span>{label}</span>
      <span className="w-[13px] flex justify-center"><Caret /></span>
    </button>
  )
}

function TopBars() {
  return (
    <header className="shrink-0 border-b border-[#dcdcdc] text-[9px] overflow-hidden">
      <div className="flex items-center h-[24px] mt-[3px]">
        <Strip items=": home | undo redo | find pipette syringe . |" />
        <Labeled icon="guide" label="Направляющие" />
        <Labeled icon="grid" label="Сетки" />
        <Strip items="~trace . ~v . ruler12 . *groups ." />
        <Labeled icon="" label="Группы" />
        <div className="flex h-full shrink-0 bg-[#bfdcf3] border border-[#a3cff0] ml-[2px]">
          <button className="flex items-center gap-[3px] px-[5px]">
            <Icon name="cutaway" />
            3D Cutaway
          </button>
          <button aria-label="cutaway options" className="w-[12px] flex items-center justify-center border-l border-[#a3cff0]">
            <Caret />
          </button>
        </div>
        <Strip items="| scissors hammer ~trimup . ~corner ~fillet ~resize . ~roofup . : tools door2 |" />
        <Strip items="layers wave hatch . bricks strata pen . brush puzzle ibeam . tableblue pie _ : shelf ~colgray sheet . |" />
        <Strip items="cube3 axisanchor split3 . overlap axes plane . cube3 | plusshape plusline | rotcam | info" />
      </div>
      <div className="flex items-center h-[24px] mt-[2px] mb-[1px]">
        <Strip items=": favblue panelblue panelgray . | clipboard . :" />
        <button className="flex items-center gap-[3px] px-[3px] h-full shrink-0 bg-[#bfdcf3] border border-[#a3cff0]">
          <Icon name="win3d" />
          3D Window
        </button>
        <Strip items="| *persp axono . cam3 . v | walk orbit | target fitview survey rotbox expand | . boxlock . v | nodes . v filter" />
        <div className="flex h-full shrink-0 bg-[#bfdcf3] border border-[#a3cff0]">
          <button aria-label="cutaway" className="w-[26px] flex items-center justify-center"><Icon name="cutaway" /></button>
          <button aria-label="cutaway list" className="w-[12px] flex items-center justify-center border-l border-[#a3cff0]"><Caret /></button>
        </div>
        <Strip items="| brush water . | photo . v photoset housegrid | campath sunhouse __ __ :" />
        <Strip items="wallcorner beamarrow trap . colsarrow colsarrowb beamb . arrowcap hatchg hatchg2 . hatch selcirc circb . selplan dupe dim12 |" />
        <Strip items="arrowcap mirror | frame hatchb abc . image arcnode | roofdash | book | monlock" />
      </div>
    </header>
  )
}

const TOOLBOX = [
  {
    title: "Конструиров",
    grid: "grid-cols-[34px_36px] h-[258px]",
    faint: false,
    tools: "wall slab column beam door window chair lamp roof shell stair rail curtain deck curtain2 corner2 opening mesh morph zone switch",
  },
  { title: "Проекция", grid: "grid-cols-[34px_36px] h-[71px]", faint: true, tools: "section elev intelev detail sheetpen camera" },
  {
    title: "Документир",
    grid: "grid-cols-[34px_36px] h-[188px]",
    faint: true,
    tools: "dim level radial angle textA label marker patch line circle poly spline fill hotspot figure drawing",
  },
  { title: "Структура", grid: "grid-cols-[28px_28px] h-[72px]", faint: false, tools: "sup2d point box3d link tetra" },
]

function Toolbox() {
  return (
    <aside className="w-[72px] shrink-0 border-r border-[#dcdcdc] flex flex-col text-[9px]">
      <div className="w-[28px] h-px bg-[#b0b0b0] mx-auto mt-[4px] mb-[2px] shrink-0" />
      <div className="grid grid-cols-[34px_36px] h-[21px] shrink-0">
        <button aria-label="Arrow" className="flex items-center justify-center bg-[#bfdcf3] outline outline-[#a3cff0] -outline-offset-1">
          <Icon name="cursor" />
        </button>
        <button aria-label="Marquee" className="flex items-center justify-center"><Icon name="marquee" size={18} /></button>
      </div>
      <div className="h-[5px] shrink-0" />
      {TOOLBOX.map((s) => (
        <section key={s.title} className="shrink-0">
          <button className="w-full h-[15px] flex items-center bg-[#d6d6d6] rounded-[2px]">
            <span className="w-[15px] pl-[3px] shrink-0"><Caret /></span>
            {s.title}
          </button>
          <div className={`grid auto-rows-fr mt-[2px] mb-[3px] ${s.grid}`}>
            {s.tools.split(" ").map((t) => (
              <button key={t} aria-label={t} className="flex items-center justify-center">
                <Icon name={t} size={18} faint={s.faint && t !== "marker"} />
              </button>
            ))}
          </div>
        </section>
      ))}
    </aside>
  )
}

function InfoBox() {
  const btn = "flex items-center justify-center gap-[4px] border border-[#c3c3c3] bg-[#e4e4e4]"
  return (
    <aside className="w-[141px] shrink-0 border-r border-[#dcdcdc]">
      <div className="w-[54px] h-px bg-[#b0b0b0] mx-auto mt-[4px]" />
      <p className="text-[7px] leading-[10px] text-[#333] pl-[2px] mt-[3px]">Main:</p>
      <div className="flex items-end gap-[2px] pl-[2px] mt-[6px]">
        <button aria-label="Selection method" className={`${btn} w-[31px] h-[14px]`}><Icon name="arrsel" size={14} /><Caret right /></button>
        <button aria-label="Marquee method" className={`${btn} w-[31px] h-[14px]`}><Icon name="marqsel" size={14} /><Caret right /></button>
        <button aria-label="Quick selection" className="w-[31px] h-[14px] flex items-center justify-center border border-[#2f7fc4] bg-[#cce4f7]"><Icon name="magnet" size={14} /></button>
        <button aria-label="Arrow tool" className={`${btn} w-[37px] h-[22px] pl-[4px]`}><Icon name="cursor" size={14} /><Caret right /></button>
      </div>
    </aside>
  )
}

const TABS = [
  { icon: "story", label: "[0. Ground floor]" },
  { icon: "layoutgray", label: "[A4 L empty]" },
  { icon: "elvblue", label: "3 F [3 F]" },
  { icon: "sect", label: "[1 S]" },
  { icon: "layout", label: "[02 All in 2]" },
  { icon: "schedule", label: "[ИКЭ-07 Model 3]" },
  { icon: "perspbold", label: "[3D / Selection, Story 0]" },
  { icon: "tower", label: "[Action Center]" },
]

function TabBar() {
  const [active, setActive] = useState(6)
  return (
    <div className="flex h-[17px] shrink-0 text-[9px] bg-[#e6e6e6]" role="tablist">
      <button aria-label="Tab overview" className="w-[20px] flex items-center justify-center shrink-0 bg-[#d9d9d9]"><Icon name="squares" /></button>
      {TABS.map((t, i) => (
        <button
          key={t.label}
          role="tab"
          aria-selected={i === active}
          onClick={() => setActive(i)}
          className={`flex-1 min-w-0 flex items-center gap-px pl-[2px] border-l border-[#c8c8c8] whitespace-nowrap ${
            i === active ? "bg-white" : "bg-[#d9d9d9]"
          }`}
        >
          <Icon name={t.icon} size={15} />
          {t.label}
          {i === active && (
            <svg width="6" height="6" viewBox="0 0 6 6" className="ml-[3px] shrink-0" aria-hidden="true">
              <path d="M1 1L5 5M5 1L1 5" stroke="#111" strokeWidth="1.5" />
            </svg>
          )}
        </button>
      ))}
      <button aria-label="Tab list" className="w-[40px] shrink-0 flex items-center justify-end gap-[4px] pr-[2px] bg-[#e0e0e0] border-l border-[#c8c8c8]">
        <Icon name="cloudhouse" />
        <Caret />
      </button>
    </div>
  )
}

const lerp = (a: number, b: number, t: number) => a + (b - a) * t

// seam end points of the right roof slope: ridge x, y, eave x, y
const SEAMS = [
  [355, 320, 645, 473], [403, 296, 718, 428], [462, 268, 775, 390], [523, 241, 828, 357],
  [575, 216, 882, 325], [622, 193, 922, 299], [665, 170, 962, 273], [708, 152, 998, 250],
  [745, 134, 1030, 230], [780, 118, 1060, 211], [812, 103, 1086, 194], [843, 89, 1110, 178],
  [872, 76, 1132, 164], [900, 64, 1152, 151], [926, 53, 1168, 141],
]

function House() {
  return (
    <svg
      viewBox="-1131 -564 3303 2151"
      className="absolute inset-0 w-full h-full"
      strokeLinejoin="round"
      role="img"
      aria-label="3D model"
    >
      <defs>
        <clipPath id="front"><path d="M93 395L305 380L592 540L586 896L120 732Z" /></clipPath>
        <clipPath id="side"><path d="M592 540L1142 195L1110 450L586 896Z" /></clipPath>
        <clipPath id="far"><path d="M37 345L738 72L955 37L315 318Z" /></clipPath>
        <clipPath id="glass"><path d="M296 512L500 563V845L300 772Z" /></clipPath>
      </defs>
      {/* plinth */}
      <path d="M130 735L586 888V917L132 750Z" fill="#c3c5bb" stroke="#222" strokeWidth="3" />
      <path d="M586 888L1108 436V455L586 917Z" fill="#dcddd2" stroke="#222" strokeWidth="3" />
      {/* walls */}
      <path d="M93 395L305 370L592 540L586 896L120 732Z" fill="#6c6f7b" stroke="#222" strokeWidth="3" />
      <path d="M592 540L1142 195L1110 440L586 888Z" fill="#6e717e" stroke="#222" strokeWidth="3" />
      <g clipPath="url(#front)" stroke="#0c0e10" strokeWidth="3.4">
        {Array.from({ length: 21 }, (_, i) => (
          <line key={i} x1="90" x2="592" y1={340 + i * 20} y2={468 + i * 21.4} />
        ))}
      </g>
      <g clipPath="url(#side)" stroke="#0c0e10" strokeWidth="3.4">
        {Array.from({ length: 24 }, (_, i) => (
          <line key={i} x1="590" x2="1142" y1={520 + i * 17} y2={165 + i * 11.4} />
        ))}
      </g>
      {/* far side opening */}
      <path d="M992 305L1036 262L1016 500L975 540L980 440Z" fill="#15191d" />
      <path d="M996 304L1018 287L1010 405L992 425Z" fill="#d9d9d2" />
      <path d="M984 452L1008 435L1003 490L978 512Z" fill="#cfccc4" />
      <path d="M1006 300L1000 420M996 455L990 500" stroke="#6b7075" strokeWidth="5" />
      <path d="M1038 262L1016 500" stroke="#a4957a" strokeWidth="5" />
      <path d="M1062 250L1080 230V270L1062 280Z" fill="#90939a" stroke="#222" strokeWidth="2" />
      <path d="M1074 234V272" stroke="#e4e4e4" strokeWidth="4" />
      {/* glazed door */}
      <path d="M155 465L510 560V852L180 742Z" fill="#3a4348" stroke="#161a1c" strokeWidth="3" />
      <path d="M165 474L182 742M505 565V848" stroke="#59636a" strokeWidth="4" />
      <path d="M178 490L268 514L276 768L192 736Z" fill="#d4d8d3" stroke="#f4f4f0" strokeWidth="4" />
      <path d="M196 694L276 648L276 766L194 733Z" fill="#b99682" />
      <path d="M196 694L276 650" stroke="#8d8d88" strokeWidth="3" />
      <path d="M184 498L278 630M190 512L278 640M196 728L278 655" stroke="#1b1b1b" strokeWidth="3" strokeDasharray="10 5" />
      <path d="M192 736L276 768" stroke="#eceee8" strokeWidth="9" />
      <g clipPath="url(#glass)">
        <path d="M296 505L505 560V850L300 775Z" fill="#d6dad4" />
        <path d="M380 535L450 552V640H380Z" fill="#5b686d" />
        <path d="M450 552L505 565V620L450 605Z" fill="#aeb6c0" />
        <path d="M415 545V600" stroke="#394247" strokeWidth="3" />
        <path d="M300 660L505 700V850L300 775Z" fill="#b99480" />
        <path d="M300 590L330 572L445 603L390 650L305 618Z" fill="#b5a9a0" stroke="#5c524a" strokeWidth="2" />
        <path d="M347 562L393 575V590L347 578ZM400 572L448 588V602L400 590Z" fill="#9a8468" stroke="#2d2a26" strokeWidth="2" />
        <path d="M305 622V670M318 620V718M332 630V722M345 640V690M305 645L370 660M320 670L365 690" stroke="#5b5b55" strokeWidth="5" />
        <path d="M362 655L490 572L502 578V700L450 715L378 695Z" fill="#dcdcd4" stroke="#777" strokeWidth="2" />
        <path d="M362 655L385 660L500 588M385 660V690M440 620V690" stroke="#888" strokeWidth="2" fill="none" />
        <path d="M348 692L458 715L500 735V770L450 803L350 765Z" fill="#cfcfc7" stroke="#666" strokeWidth="2" />
        <path d="M348 692L370 686L462 708L460 800M445 716L450 803M470 690L502 680V740L462 760" stroke="#666" strokeWidth="3" fill="none" />
        <path d="M300 768L500 838" stroke="#eceee8" strokeWidth="12" />
      </g>
      <path d="M296 512L500 563V845L300 772Z" fill="none" stroke="#e9ebe6" strokeWidth="3" />
      <path d="M258 648L282 656" stroke="#8a8f92" strokeWidth="6" />
      {/* roof, far slope */}
      <path d="M37 345L738 72L955 37L315 318Z" fill="#343b3f" stroke="#0b0d0e" strokeWidth="5" />
      <g stroke="#949b9e" strokeWidth="2.5" clipPath="url(#far)">
        {Array.from({ length: 27 }, (_, i) => {
          const t = Math.pow((i + 1) / 27, 0.85)
          return (
            <line key={i} x1={lerp(50, 780, t)} y1={lerp(340, 56, t)} x2={lerp(190, 960, t)} y2={lerp(362, 82, t)} />
          )
        })}
      </g>
      {/* roof, near slope */}
      <path d="M315 316L955 37L1183 133L615 495Z" fill="#333b3f" stroke="#0b0d0e" strokeWidth="6" />
      {SEAMS.map(([x1, y1, x2, y2]) => (
        <g key={x1}>
          <line x1={x1} y1={y1} x2={x2} y2={y2} stroke="#0e1113" strokeWidth="7" />
          <line x1={x1} y1={y1} x2={x2} y2={y2} stroke="#a5a8a9" strokeWidth="3" />
        </g>
      ))}
      <path d="M295 322L940 42L960 38L345 318L318 326Z" fill="#252b2f" stroke="#050606" strokeWidth="4" />
      <path d="M350 312L950 50" stroke="#060708" strokeWidth="6" strokeDasharray="46 12" />
      {/* eave along the side */}
      <path d="M612 492L1183 128L1168 160L1160 190L612 545Z" fill="#41474d" stroke="#0b0d0e" strokeWidth="4" />
      <path d="M620 497L1180 136" stroke="#0b0d0e" strokeWidth="9" />
      <path d="M640 480L1172 140" stroke="#596167" strokeWidth="2" />
      <path d="M650 520L1160 188" stroke="#1c2023" strokeWidth="8" />
      {/* gable fascia */}
      <path d="M37 345L305 318L612 492V542L592 546L305 376L60 403L52 365Z" fill="#4b5056" stroke="#0b0d0e" strokeWidth="4" />
      <path d="M37 345L305 318L340 325L622 492L608 508L305 334L48 360Z" fill="#2c3236" stroke="#0b0d0e" strokeWidth="4" />
      <path d="M52 390L305 372L600 545" fill="none" stroke="#343b40" strokeWidth="12" />
      {/* downpipes */}
      <path d="M662 478V520L640 540L630 900" fill="none" stroke="#23282b" strokeWidth="12" />
      <path d="M662 478V520L640 540L630 900" fill="none" stroke="#5a636a" strokeWidth="6" />
      <path d="M1160 165L1138 195L1106 458" fill="none" stroke="#30383c" strokeWidth="9" />
      <path d="M592 548L586 890" stroke="#3c3f48" strokeWidth="7" />
      <path d="M590 730V885L500 860L445 835M600 882L680 800" fill="none" stroke="#6f789f" strokeWidth="3" />
      <path d="M592 712h8v20h-8zM445 815h8v20h-8zM682 786h8v14h-8z" fill="#8e9ad8" />
    </svg>
  )
}

const QUICK = [
  { icon: "zoomfit", label: "N/A", off: true },
  { icon: "pan", label: "N/A", off: true },
  { icon: "meas", label: "1:1" },
  { icon: "layers", label: "03 Plans - K..." },
  { icon: "modelhatch", label: "Entire Model" },
  { icon: "pen", label: "03 Архитект..." },
  { icon: "viewset", label: "03 Building ..." },
  { icon: "swap", label: "Без Замены" },
  { icon: "renov", label: "00 Show All ..." },
  { icon: "model", label: "Main Model..." },
  { icon: "axono", label: "3D Window ..." },
]

function QuickOptions() {
  return (
    <div className="flex h-[15px] shrink-0 items-center text-[9px] bg-[#f0f0f0]">
      <div className="flex items-center w-[96px] shrink-0 h-full">
        {["zprev", "~znext", "zoomin", "|", "orbits", "walk"].map((n) =>
          n === "|" ? (
            <span key={n} className="w-px h-full mx-[2px] bg-[#a8a8a8]" />
          ) : (
            <button key={n} aria-label={n.replace("~", "")} className="w-[18px] flex justify-center">
              <Icon name={n.replace("~", "")} size={13} faint={n[0] === "~"} />
            </button>
          )
        )}
      </div>
      {QUICK.map((q, i) => (
        <button
          key={i}
          disabled={q.off}
          className={`flex-1 min-w-0 h-full flex items-center pl-[4px] border-l border-[#a8a8a8] whitespace-nowrap ${
            q.off ? "text-[#8a8a8a]" : "text-black"
          }`}
        >
          <Icon name={q.icon} size={13} faint={q.icon === "pan"} />
          <span className="flex-1 text-right pr-[2px]">
            <span className={q.label.length < 5 ? "pr-[18px]" : ""}>{q.label}</span>
          </span>
          <Caret right faint={q.off} />
          <span className="w-[3px]" />
        </button>
      ))}
    </div>
  )
}

type Row = { d: number; icon: string; label: string; open?: boolean; active?: boolean }

const TREE: Row[] = [
  { d: 0, icon: "project", label: "Barny 30_3xModel", open: true },
  { d: 1, icon: "storygray", label: "Stories", open: true },
  { d: 2, icon: "story", label: "2. Roof" },
  { d: 2, icon: "story", label: "1. Roof beam" },
  { d: 2, icon: "story", label: "0. Ground floor" },
  { d: 2, icon: "story", label: "-1. Heating system" },
  { d: 2, icon: "story", label: "-2. Floor beam" },
  { d: 2, icon: "story", label: "-3. Tarraine" },
  { d: 1, icon: "sectgray", label: "Sections", open: true },
  { d: 2, icon: "sect", label: "1 S (Auto-rebuild Model)" },
  { d: 1, icon: "elvgray", label: "Elevations", open: true },
  ...[1, 2, 3, 4, 5, 6, 7, 8].map((n) => ({ d: 2, icon: "elv", label: `${n} F (Auto-rebuild Model)` })),
  { d: 1, icon: "intel", label: "Interior Elevations" },
  { d: 1, icon: "sheetpen", label: "Worksheets" },
  { d: 1, icon: "detail", label: "Details" },
  { d: 1, icon: "doc3d", label: "3D Documents" },
  { d: 1, icon: "perspbold", label: "3D", open: true },
  { d: 2, icon: "perspbold", label: "Generic Perspective", active: true },
  { d: 2, icon: "axono", label: "Generic Axonometry" },
  { d: 2, icon: "campath", label: "00 Untitled Path", open: true },
  ...[1, 2, 3, 4, 5].map((n) => ({ d: 3, icon: "camera", label: `Camera ${n}` })),
  { d: 1, icon: "schedule", label: "Schedules", open: true },
  { d: 2, icon: "element", label: "Elements", open: true },
  { d: 3, icon: "schedule", label: "CI +Wall" },
]

const INDENT = ["pl-[3px]", "pl-[11px]", "pl-[19px]", "pl-[27px]"]

function Chevron({ d }: { d: string }) {
  return (
    <svg width="8" height="8" viewBox="0 0 8 8" fill="none" stroke="#333" strokeWidth="1.4" aria-hidden="true">
      <path d={d} />
    </svg>
  )
}

function Navigator() {
  const [query, setQuery] = useState("")
  return (
    <aside className="w-[187px] shrink-0 border-l border-[#dcdcdc] flex flex-col text-[9px]">
      <div className="w-[54px] h-px bg-[#b0b0b0] mx-auto mt-[3px] mb-[3px] shrink-0" />
      <div className="flex items-center h-[23px] pl-[2px] pr-[3px] shrink-0">
        <button aria-label="Project Map" className="w-[23px] h-full flex items-center justify-center bg-[#bfdcf3] border border-[#a3cff0]">
          <Icon name="project" />
        </button>
        <span className="w-px h-[14px] bg-[#a0a0a0] ml-[4px] mr-[5px]" />
        {["viewmap", "layoutbook", "publisher"].map((n) => (
          <button key={n} aria-label={n} className="w-[23px] flex justify-center"><Icon name={n} /></button>
        ))}
        <button aria-label="Navigator menu" className="ml-auto w-[25px] h-[16px] flex items-center justify-center gap-[2px] border border-[#b4b4b4] bg-[#e4e4e4]">
          <Icon name="menu" size={12} />
          <Caret right />
        </button>
      </div>
      <label className="flex items-center gap-[3px] h-[18px] mt-[5px] ml-px mr-[2px] px-[2px] bg-white border border-[#7a7a7a] shrink-0">
        <Icon name="search" size={12} />
        <input
          value={query}
          onChange={(e) => setQuery(e.target.value)}
          placeholder="Search Project Map"
          aria-label="Search Project Map"
          className="flex-1 min-w-0 outline-none placeholder:text-[#5a5a5a]"
        />
      </label>
      <div className="flex flex-1 min-h-0 mt-px">
        <div className="flex-1 overflow-hidden bg-white">
          <ul className="grid auto-rows-fr h-[601px]">
            {TREE.map((r, i) => (
              <li key={i} className={`flex ${r.active ? "bg-[#d6d6d6] font-bold" : ""}`}>
                <button className={`flex items-center w-full whitespace-nowrap ${INDENT[r.d]}`}>
                  <span className="w-[12px] shrink-0">{r.open && <Chevron d="M1 2.5L4 5.5L7 2.5" />}</span>
                  <span className="w-[19px] shrink-0"><Icon name={r.icon} size={15} /></span>
                  {r.label}
                </button>
              </li>
            ))}
          </ul>
        </div>
        <div className="w-[13px] shrink-0 flex flex-col items-center">
          <button aria-label="Scroll up" className="h-[14px]"><Chevron d="M1 5.5L4 2.5L7 5.5" /></button>
          <div className="w-[11px] flex-1 flex flex-col">
            <div className="bg-[#cdcdcd] basis-[54%]" />
          </div>
          <button aria-label="Scroll down" className="h-[14px]"><Chevron d="M1 2.5L4 5.5L7 2.5" /></button>
        </div>
      </div>
      <div className="flex items-center h-[12px] pl-[1px] pr-[14px] shrink-0">
        <button aria-label="Scroll left" className="w-[12px] pl-[2px]"><Chevron d="M5.5 1L2.5 4L5.5 7" /></button>
        <div className="flex-1 h-[11px]"><div className="w-[85%] h-full bg-[#cdcdcd]" /></div>
        <button aria-label="Scroll right" className="w-[12px] pl-[2px]"><Chevron d="M2.5 1L5.5 4L2.5 7" /></button>
      </div>
      <div className="flex items-center h-[28px] pl-[2px] shrink-0">
        {["plusc", "listb", "del"].map((n) => (
          <button key={n} aria-label={n} className="w-[23px] flex justify-center"><Icon name={n} size={13} /></button>
        ))}
      </div>
      <button className="flex items-center h-[16px] mx-[2px] bg-[#d6d6d6] rounded-[2px] shrink-0">
        <span className="w-[17px] pl-[3px]"><Caret /></span>
        Properties
      </button>
      <div className="flex items-center h-[21px] pl-[3px] shrink-0">
        <Icon name="persp" size={11} />
        <span className="flex-1 text-center">Generic Perspective</span>
      </div>
      <button className="h-[16px] mx-[2px] mb-[3px] border border-[#adadad] bg-[#e1e1e1] leading-none shrink-0">Settings...</button>
    </aside>
  )
}

function BottomBars() {
  return (
    <footer className="shrink-0 border-t border-[#dcdcdc] text-[9px] overflow-hidden">
      <div className="flex items-center h-[31px]">
        <Strip items=": zoomin zoomout . hand _ zoomfit v zprev ~znext | walk orbit _ :" />
        <Strip small items="snap gridb rulerg gravity . *lockwall . weight ~v | . guide oline ocross erase | . paral perp . bisect . v |" />
        <Strip small items=". editplane . v | planeh planev planeg . . :" />
        <button className="flex flex-col items-center justify-center h-full shrink-0 px-[3px]">
          <span className="pl-[16px]"><Caret /></span>
          <span className="leading-[16px] pt-[4px]">Выровнять</span>
        </button>
        <Strip small items="skew v :" />
        <Strip items="~move ~v . ~rotate ~v . ~percent ~v" />
        <button disabled className="flex items-center gap-[3px] text-[#8f8f8f] shrink-0 ml-[2px] mr-[10px]">
          <Icon name="stack" faint />
          Multiply...
        </button>
        <Strip items=": grp1 grp2 polyb . *groups | topup up down . bottom flip | ~lock ~unlock locks . | colsg layereye" />
      </div>
      <div className="flex items-center h-[29px]">
        <Strip small items=": barsb magsel framebrush | scissors ~scale ~resize hammer ~fillet . ~corner trimup ~offsetc | . crossbox boxrot hamg hamg2 . |" />
        <Strip small items="pil pil2 pil3 | _ aligncur v . circcur ~v cap stack . | . addc ~v | ~home copyb copyk strike dots | . cubec cubec . : . mep1 mep2 |" />
        <Strip small items="mep3 mep4 | cubeplus | cubes favblue mirror arrowcap mep3 . pipeg __ __ _ _ :" />
        <Strip items="rack | duct1 duct2 duct3 . duct4 duct5 duct6 . duct7 |" />
        <Strip items="pipe1 pipe2 pipe3 . pipe4 pipe5 pipe6 . | tray1 tray2 tray3" />
      </div>
      <div className="flex items-center h-[16px] border-t border-[#dcdcdc] pl-[2px]">
        <p className="flex-1">
          Click an Element or Draw a Selection Area. Press and Hold Ctrl+Shift to Toggle Element/Sub-Element Selection.
        </p>
        <button aria-label="Windows" className="w-[20px] flex justify-center"><Icon name="windows" size={14} /></button>
        <a href="#id" className="w-[102px] text-center border-x border-[#dcdcdc] font-['Lato'] text-[11px] leading-[15px] text-[#37474f]">
          <span className="font-medium text-[#1c272c]">GRAPHISOFT</span> ID
        </a>
        <span className="w-[18px]" />
      </div>
    </footer>
  )
}

export default function App() {
  return (
    <div className="h-screen flex flex-col overflow-hidden bg-[#f0f0f0] text-black font-['Open_Sans','Noto_Sans',sans-serif]">
      <TopBars />
      <div className="flex flex-1 min-h-0">
        <Toolbox />
        <InfoBox />
        <main className="flex flex-col flex-1 min-w-0">
          <TabBar />
          <div className="relative flex-1 bg-white">
            <House />
            <button aria-label="Show" className="absolute top-0 left-1/2 -translate-x-1/2 w-[25px] h-[13px] bg-[#ececec] rounded-b flex items-center justify-center">
              <Icon name="eye" size={18} />
            </button>
          </div>
          <QuickOptions />
        </main>
        <Navigator />
      </div>
      <BottomBars />
    </div>
  )
}
